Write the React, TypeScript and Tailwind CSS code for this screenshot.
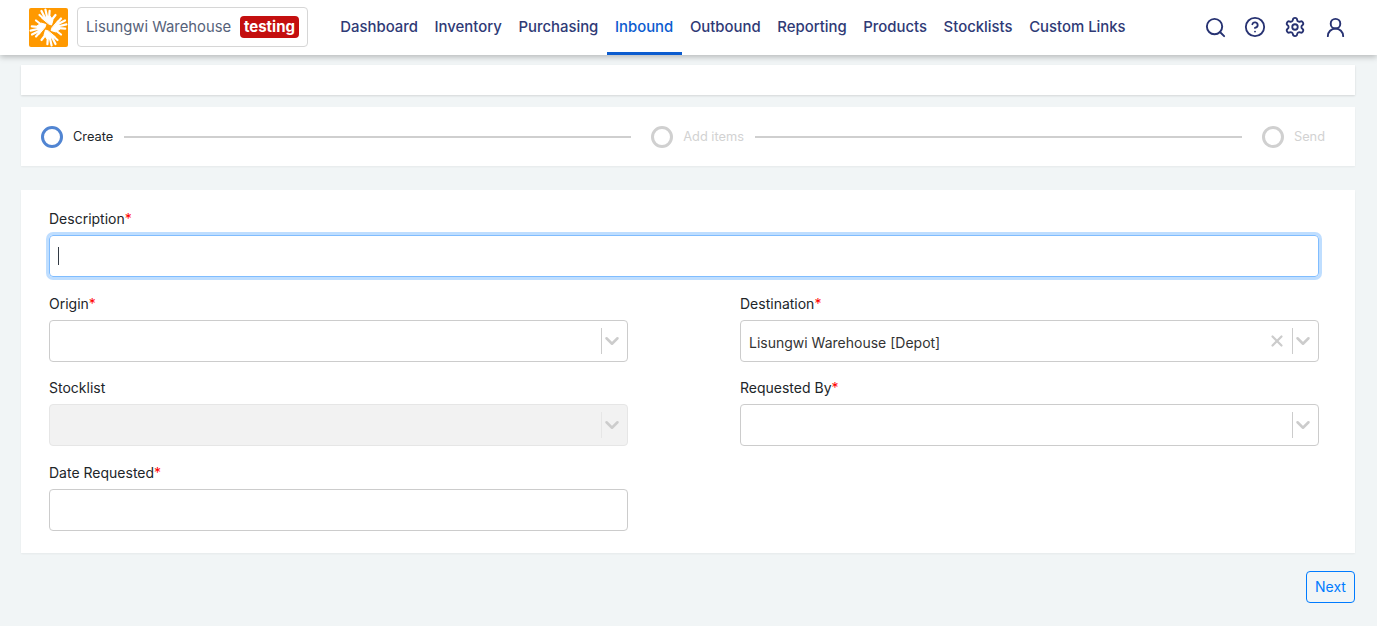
import { Search, CircleHelp, Settings, UserRound, ChevronDown, X } from "lucide-react";

const navItems = ["Dashboard", "Inventory", "Purchasing", "Inbound", "Outbound", "Reporting", "Products", "Stocklists", "Custom Links"];

function Hand({ rotate }: { rotate: number }) {
  return (
    <g transform={`rotate(${rotate} 19.5 19.5)`} stroke="#ffffff" strokeLinecap="round" strokeLinejoin="round" fill="#ffffff">
      <path d="M13 10 L21 8 L24 12 L22.5 17 L19.8 16 Z" strokeWidth="1" />
      <path d="M14.5 10.5 L10.5 7" strokeWidth="2.2" fill="none" />
      <path d="M15.5 9 L12.5 3" strokeWidth="2.2" fill="none" />
      <path d="M18 8.5 L16.4 1.6" strokeWidth="2.2" fill="none" />
      <path d="M20.2 9 L20.6 2.8" strokeWidth="2.2" fill="none" />
      <path d="M23 11.5 L26.5 7" strokeWidth="2.2" fill="none" />
    </g>
  );
}

function Logo() {
  return (
    <svg viewBox="0 0 39 39" className="w-[39px] h-[39px] shrink-0 mb-px">
      <rect x="0" y="0" width="39" height="39" rx="2" fill="#ff9900" />
      <Hand rotate={0} />
      <Hand rotate={90} />
      <Hand rotate={180} />
      <Hand rotate={270} />
    </svg>
  );
}

function Label({ text, required }: { text: string; required?: boolean }) {
  return (
    <label className="block text-sm leading-[21px] text-[#212529] mb-[6px]">
      {text}
      {required && <span className="text-[#ff0000]">*</span>}
    </label>
  );
}

function SelectBox({ value, clearable, disabled }: { value?: string; clearable?: boolean; disabled?: boolean }) {
  return (
    <div
      className={`h-[42px] rounded border flex items-center pl-2 ${
        disabled ? "bg-[#f2f2f2] border-[#e6e6e6]" : "bg-white border-[#cccccc]"
      }`}
    >
      <span className="flex-1 text-sm text-[#333333] pt-[3px]">{value}</span>
      {clearable && <X size={18} strokeWidth={3} className="text-[#cccccc] mr-[6px]" />}
      <span className={`w-px h-[26px] ${disabled ? "bg-[#e6e6e6]" : "bg-[#cccccc]"}`} />
      <ChevronDown size={22} strokeWidth={2.75} className="text-[#cccccc] -ml-px mr-1" />
    </div>
  );
}

function Step({ label, active }: { label: string; active?: boolean }) {
  return (
    <div className="flex items-center gap-[10px] shrink-0">
      <span className={`w-[22px] h-[22px] rounded-full border-[3px] ${active ? "border-[#5185d2]" : "border-[#d0d0d0]"}`} />
      <span className={`text-[12.8px] ${active ? "text-[#212529]" : "text-[#d2d2d2]"}`}>{label}</span>
    </div>
  );
}

export default function App() {
  return (
    <div className="min-h-[626px] bg-[#f1f5f6] font-['Inter',sans-serif] overflow-hidden">
      {/* Header */}
      <header className="h-[55px] bg-white shadow-[0_2px_6px_rgba(0,0,0,0.25)] flex items-center pl-[29px] pr-[31px] relative">
        <Logo />
        <div className="ml-[9px] mb-px h-10 w-[231px] rounded border border-[#d6d6d6] flex items-center pl-2 pr-2 justify-between">
          <span className="text-[14.8px] text-[#56627a]">Lisungwi Warehouse</span>
          <span className="bg-[#c40f0f] text-white text-[15px] font-bold rounded-sm px-1 h-[22px] flex items-center">testing</span>
        </div>
        <nav className="ml-6 flex h-full">
          {navItems.map((item) => (
            <a
              key={item}
              className={`px-[8.3px] flex items-center text-[14.9px] font-medium border-b-[3px] pt-[2px] ${
                item === "Inbound" ? "text-[#0c5ccf] border-[#0c5ccf]" : "text-[#2f3a76] border-transparent"
              }`}
            >
              {item}
            </a>
          ))}
        </nav>
        <div className="ml-auto mb-px flex items-center gap-[18px] text-[#273272]">
          <Search size={23} strokeWidth={2} className="-mx-[0.5px]" />
          <CircleHelp size={22} strokeWidth={2} />
          <Settings size={22} strokeWidth={2} />
          <UserRound size={23} strokeWidth={2} className="-mx-[0.5px]" />
        </div>
      </header>

      <main className="px-[21px] pr-[22px] pt-[10px]">
        <div className="h-[30px] bg-white shadow-[0_1px_2px_rgba(0,0,0,0.12)]" />

        {/* Stepper */}
        <div className="mt-3 h-[59px] bg-white shadow-[0_1px_2px_rgba(0,0,0,0.05)] flex items-center pl-[20px] pr-[30px]">
          <Step label="Create" active />
          <span className="w-[507px] ml-[11px] mr-5 h-0.5 bg-[#cfcfcf]" />
          <Step label="Add items" />
          <span className="flex-1 ml-[11px] mr-5 h-0.5 bg-[#cfcfcf]" />
          <Step label="Send" />
        </div>

        {/* Form */}
        <div className="mt-6 h-[363px] bg-white shadow-[0_1px_2px_rgba(0,0,0,0.05)] pl-7 pr-9 pt-[18px]">
          <Label text="Description" required />
          <div className="h-[42px] rounded border border-[#80bdff] shadow-[0_0_0_3px_rgba(0,123,255,0.25)] flex items-center pl-2">
            <span className="w-px h-[18px] bg-[#333a44]" />
          </div>
          <div className="mt-4 grid grid-cols-2 gap-x-28 gap-y-[15.4px] items-start">
            <div>
              <Label text="Origin" required />
              <SelectBox />
            </div>
            <div>
              <Label text="Destination" required />
              <SelectBox value="Lisungwi Warehouse [Depot]" clearable />
            </div>
            <div>
              <Label text="Stocklist" />
              <SelectBox disabled />
            </div>
            <div>
              <Label text="Requested By" required />
              <SelectBox />
            </div>
            <div>
              <Label text="Date Requested" required />
              <div className="h-[42px] rounded border border-[#cccccc] bg-white" />
            </div>
          </div>
        </div>

        <div className="mt-[18px] flex justify-end">
          <button className="h-8 w-[49px] rounded border border-[#007bff] text-sm text-[#007bff]">Next</button>
        </div>
      </main>
    </div>
  );
}
